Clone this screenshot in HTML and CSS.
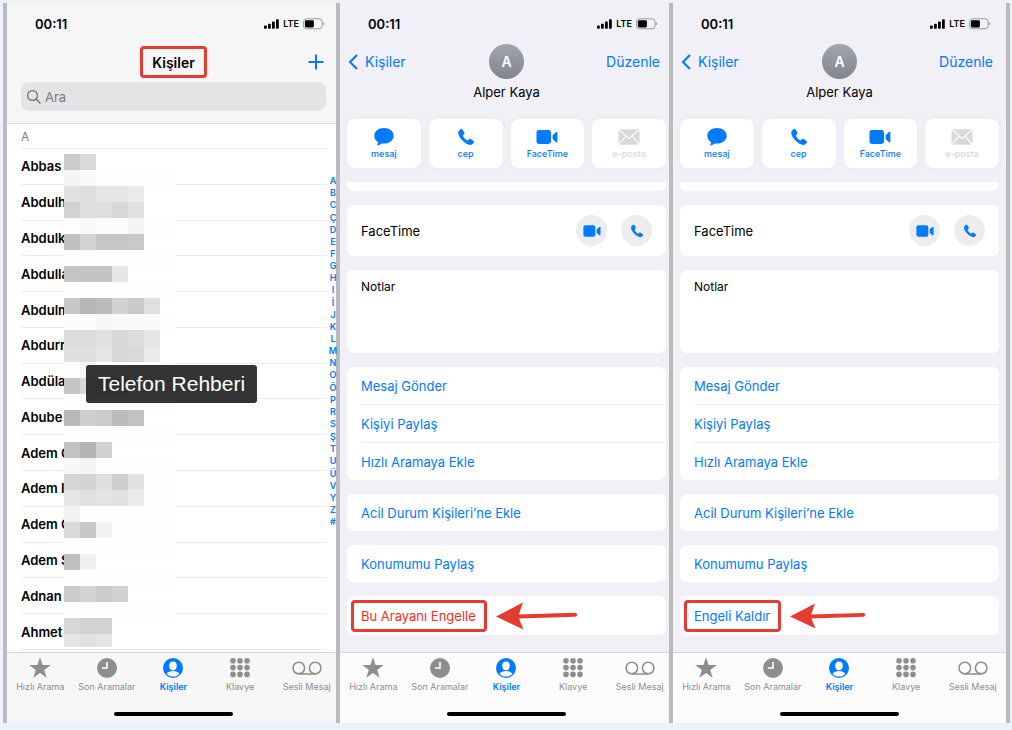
FILE: index.html
```html
<!DOCTYPE html>
<html lang="tr">
  <head>
    <meta charset="UTF-8" />
    <meta name="viewport" content="width=device-width, initial-scale=1.0" />
    <title>Telefon Rehberi</title>
    <link rel="stylesheet" href="styles.css">
  </head>

  <body>
    <!-- Shared icons -->
    <svg class="sprite" aria-hidden="true">
      <symbol id="signal" viewBox="0 0 15 10">
        <rect x="0" y="6.5" width="2.8" height="3.3" rx="0.8" />
        <rect x="4" y="4.8" width="2.8" height="5" rx="0.8" />
        <rect x="8" y="2.6" width="2.8" height="7.2" rx="0.8" />
        <rect x="12" y="0.2" width="2.8" height="9.6" rx="0.8" />
      </symbol>
      <symbol id="battery" viewBox="0 0 22 12">
        <rect x="0.5" y="0.8" width="18.6" height="10" rx="3" fill="none" stroke="#999" />
        <rect x="1.9" y="2.2" width="9" height="7.2" rx="1.4" />
        <path d="M20.2 4v3.6c1.4-.6 1.4-3 0-3.6z" fill="#999" />
      </symbol>
      <symbol id="star" viewBox="0 0 22 22">
        <path d="M11 .2l2.6 7.9h8.2l-6.6 4.8 2.5 7.9L11 15.9l-6.7 4.9 2.5-7.9L.2 8.1h8.2z" />
      </symbol>
      <symbol id="clock" viewBox="0 0 22 22">
        <circle cx="11" cy="11" r="10" />
        <path d="M11 5v6H6" fill="none" stroke="#fff" stroke-width="1.6" />
      </symbol>
      <symbol id="person" viewBox="0 0 22 22">
        <circle cx="11" cy="11" r="10" />
        <ellipse cx="11" cy="8.8" rx="3.8" ry="4.4" fill="#fff" />
        <path d="M4.6 17c1.2-2.2 3.6-3 6.4-3s5.2.8 6.4 3c-1.7 1.7-4 2.6-6.4 2.6S6.3 18.7 4.6 17z" fill="#fff" />
      </symbol>
      <symbol id="keypad" viewBox="0 0 22 22">
        <circle cx="4" cy="3.8" r="2.8" /><circle cx="11" cy="3.8" r="2.8" /><circle cx="18" cy="3.8" r="2.8" />
        <circle cx="4" cy="10.6" r="2.8" /><circle cx="11" cy="10.6" r="2.8" /><circle cx="18" cy="10.6" r="2.8" />
        <circle cx="4" cy="17.4" r="2.8" /><circle cx="11" cy="17.4" r="2.8" /><circle cx="18" cy="17.4" r="2.8" />
      </symbol>
      <symbol id="voicemail" viewBox="0 0 30 22">
        <path d="M6.5 17h17" />
        <circle cx="6.8" cy="11" r="5.8" />
        <circle cx="23.2" cy="11" r="5.8" />
      </symbol>
      <symbol id="bubble" viewBox="0 0 20 18">
        <path d="M10 0C4.5 0 .3 3.3.3 7.8c0 2.7 1.5 5 3.9 6.5-.1 1.1-.7 2.1-1.5 2.9 2.2 0 3.9-.7 5.1-1.8.7.1 1.4.2 2.2.2 5.5 0 9.7-3.3 9.7-7.8S15.500 0 10 0z" />
      </symbol>
      <symbol id="handset" viewBox="0 0 18 18">
        <path d="M3.600 1.200L1.900 2.700C.5 4.300 1.400 8 5 12c3.800 4.100 7.700 5.800 10 4.500l1.600-1.600c.6-.7.4-1.300-.2-1.800l-2.700-2c-.7-.5-1.300-.4-1.900.2l-.9.900c-.5.400-1 .2-1.600-.300C8.200 11 6.900 9.500 6.200 8.400c-.3-.5-.3-.9.100-1.300l.8-.9c.5-.5.6-1.200.2-1.900L5.500 1.400C5 .7 4.300.6 3.600 1.200z" />
      </symbol>
      <symbol id="camera" viewBox="0 0 22 14">
        <rect x="0.5" y="0" width="14.5" height="14" rx="2.4" />
        <path d="M16.600 5.200v3.900l3.500 3.100c.7.500 1.300.3 1.300-.5V2.500c0-.8-.6-1-1.300-.5z" />
      </symbol>
      <symbol id="envelope" viewBox="0 0 20 15">
        <rect x="0.5" y="0.5" width="19" height="14" rx="1" />
        <path d="M.8.8L10 8.800 19.200.8M.8 14.300l6.400-7.600M19.200 14.300l-6.400-7.600" fill="none" stroke="#fff" stroke-width="1.1" />
      </symbol>
      <symbol id="arrow" viewBox="0 0 82 28">
        <path d="M0 14.600L27 .5 22.800 12.500 79 10.800c2.800-.1 2.800 3.800 0 3.900L23 16.600 27.500 27.500z" />
      </symbol>
    </svg>

    <main class="screens">
      <!-- Contact list -->
      <section class="phone phone-list">
        <header class="list-header">
          <div class="status">
            <span class="time">00:11</span>
            <svg class="signal"><use href="#signal" /></svg>
            <span class="network">LTE</span>
            <svg class="battery"><use href="#battery" /></svg>
          </div>
          <div class="title-bar">
            <h1 class="marked">Kişiler</h1>
            <button class="add" aria-label="Ekle">
              <svg viewBox="0 0 16 16"><path d="M8 .5v15M.5 8h15" /></svg>
            </button>
          </div>
          <label class="search">
            <svg viewBox="0 0 14 14"><circle cx="5.5" cy="5.5" r="4.9" /><path d="M9 9l4.500 4.500" /></svg>
            <input type="search" placeholder="Ara" aria-label="Ara" />
          </label>
        </header>

        <div class="contacts">
          <h2>A</h2>
          <ul>
            <li>Abbas</li>
            <li>Abdulh</li>
            <li>Abdulk</li>
            <li>Abdulla</li>
            <li>Abdulm</li>
            <li>Abdurr</li>
            <li>Abdüla</li>
            <li>Abube</li>
            <li>Adem C</li>
            <li>Adem I</li>
            <li>Adem C</li>
            <li>Adem S</li>
            <li>Adnan</li>
            <li>Ahmet</li>
          </ul>
          <svg class="mosaic" id="mosaic" viewBox="0 0 111 493" aria-hidden="true"></svg>
          <nav class="letters">
            <a href="#">A</a><a href="#">B</a><a href="#">C</a><a href="#" class="accent">Ç</a>
            <a href="#">D</a><a href="#">E</a><a href="#">F</a><a href="#">G</a>
            <a href="#">H</a><a href="#">I</a><a href="#" class="accent">İ</a><a href="#">J</a>
            <a href="#">K</a><a href="#">L</a><a href="#">M</a><a href="#">N</a>
            <a href="#">O</a><a href="#" class="accent">Ö</a><a href="#">P</a><a href="#">R</a>
            <a href="#">S</a><a href="#" class="accent">Ş</a><a href="#">T</a><a href="#">U</a>
            <a href="#" class="accent">Ü</a><a href="#">V</a><a href="#">Y</a><a href="#">Z</a>
            <a href="#">#</a>
          </nav>
          <div class="tooltip">Telefon Rehberi</div>
        </div>

        <footer class="tab-bar">
          <nav>
            <a href="#"><svg><use href="#star" /></svg>Hızlı Arama</a>
            <a href="#"><svg><use href="#clock" /></svg>Son Aramalar</a>
            <a href="#" class="active"><svg><use href="#person" /></svg>Kişiler</a>
            <a href="#"><svg><use href="#keypad" /></svg>Klavye</a>
            <a href="#"><svg class="voicemail"><use href="#voicemail" /></svg>Sesli Mesaj</a>
          </nav>
          <div class="home-bar"></div>
        </footer>
      </section>

      <!-- Contact, before blocking -->
      <section class="phone">
        <header class="card-header">
          <div class="status">
            <span class="time">00:11</span>
            <svg class="signal"><use href="#signal" /></svg>
            <span class="network">LTE</span>
            <svg class="battery"><use href="#battery" /></svg>
          </div>
          <div class="card-nav">
            <a href="#" class="back"><svg viewBox="0 0 10 16"><path d="M9 1L2 8l7 7" /></svg>Kişiler</a>
            <span class="avatar">A</span>
            <a href="#" class="edit">Düzenle</a>
          </div>
          <p class="name">Alper Kaya</p>
          <div class="actions">
            <button><svg><use href="#bubble" /></svg>mesaj</button>
            <button><svg><use href="#handset" /></svg>cep</button>
            <button><svg><use href="#camera" /></svg>FaceTime</button>
            <button disabled><svg><use href="#envelope" /></svg>e-posta</button>
          </div>
        </header>

        <div class="cards">
          <div class="card card-cut"></div>
          <div class="card facetime">
            <span>FaceTime</span>
            <button aria-label="Görüntülü"><svg><use href="#camera" /></svg></button>
            <button aria-label="Sesli"><svg><use href="#handset" /></svg></button>
          </div>
          <div class="card notes">Notlar</div>
          <div class="card">
            <a href="#" class="row">Mesaj Gönder</a>
            <a href="#" class="row">Kişiyi Paylaş</a>
            <a href="#" class="row">Hızlı Aramaya Ekle</a>
          </div>
          <div class="card"><a href="#" class="row">Acil Durum Kişileri’ne Ekle</a></div>
          <div class="card"><a href="#" class="row">Konumumu Paylaş</a></div>
          <div class="card block-row">
            <a href="#" class="marked danger">Bu Arayanı Engelle</a>
            <svg class="arrow"><use href="#arrow" /></svg>
          </div>
        </div>

        <footer class="tab-bar">
          <nav>
            <a href="#"><svg><use href="#star" /></svg>Hızlı Arama</a>
            <a href="#"><svg><use href="#clock" /></svg>Son Aramalar</a>
            <a href="#" class="active"><svg><use href="#person" /></svg>Kişiler</a>
            <a href="#"><svg><use href="#keypad" /></svg>Klavye</a>
            <a href="#"><svg class="voicemail"><use href="#voicemail" /></svg>Sesli Mesaj</a>
          </nav>
          <div class="home-bar"></div>
        </footer>
      </section>

      <!-- Contact, after blocking -->
      <section class="phone">
        <header class="card-header">
          <div class="status">
            <span class="time">00:11</span>
            <svg class="signal"><use href="#signal" /></svg>
            <span class="network">LTE</span>
            <svg class="battery"><use href="#battery" /></svg>
          </div>
          <div class="card-nav">
            <a href="#" class="back"><svg viewBox="0 0 10 16"><path d="M9 1L2 8l7 7" /></svg>Kişiler</a>
            <span class="avatar">A</span>
            <a href="#" class="edit">Düzenle</a>
          </div>
          <p class="name">Alper Kaya</p>
          <div class="actions">
            <button><svg><use href="#bubble" /></svg>mesaj</button>
            <button><svg><use href="#handset" /></svg>cep</button>
            <button><svg><use href="#camera" /></svg>FaceTime</button>
            <button disabled><svg><use href="#envelope" /></svg>e-posta</button>
          </div>
        </header>

        <div class="cards">
          <div class="card card-cut"></div>
          <div class="card facetime">
            <span>FaceTime</span>
            <button aria-label="Görüntülü"><svg><use href="#camera" /></svg></button>
            <button aria-label="Sesli"><svg><use href="#handset" /></svg></button>
          </div>
          <div class="card notes">Notlar</div>
          <div class="card">
            <a href="#" class="row">Mesaj Gönder</a>
            <a href="#" class="row">Kişiyi Paylaş</a>
            <a href="#" class="row">Hızlı Aramaya Ekle</a>
          </div>
          <div class="card"><a href="#" class="row">Acil Durum Kişileri’ne Ekle</a></div>
          <div class="card"><a href="#" class="row">Konumumu Paylaş</a></div>
          <div class="card block-row">
            <a href="#" class="marked">Engeli Kaldır</a>
            <svg class="arrow arrow-short"><use href="#arrow" /></svg>
          </div>
        </div>

        <footer class="tab-bar">
          <nav>
            <a href="#"><svg><use href="#star" /></svg>Hızlı Arama</a>
            <a href="#"><svg><use href="#clock" /></svg>Son Aramalar</a>
            <a href="#" class="active"><svg><use href="#person" /></svg>Kişiler</a>
            <a href="#"><svg><use href="#keypad" /></svg>Klavye</a>
            <a href="#"><svg class="voicemail"><use href="#voicemail" /></svg>Sesli Mesaj</a>
          </nav>
          <div class="home-bar"></div>
        </footer>
      </section>
    </main>

    <script src="mosaic.js"></script>
  </body>
</html>
```
FILE: styles.css
```css
* {
  box-sizing: border-box;
}

body {
  margin: 0;
  min-height: 100vh;
  display: flex;
  background-color: #ecf2f9;
  font-family: Inter, "Liberation Sans", sans-serif;
  font-size: 13px;
  color: #000;
}

a {
  color: #007aff;
  text-decoration: none;
}

button {
  padding: 0;
  border: none;
  background: none;
  font-family: inherit;
  color: #007aff;
  cursor: pointer;
}

h1,
h2,
p,
ul {
  margin: 0;
  padding: 0;
}

.sprite {
  position: absolute;
  width: 0;
  height: 0;
}

.screens {
  flex: 1;
  display: grid;
  grid-template-columns: repeat(3, 1fr);
  padding: 3px 6px 7px 7px;
}

.phone {
  position: relative;
  display: flex;
  flex-direction: column;
  background-color: #f1f0f6;
}

.phone-list {
  background-color: #fff;
}

/* grey line between the screens */
.phone::before,
.phone:last-child::after {
  content: "";
  position: absolute;
  top: 0;
  bottom: 0;
  left: -4px;
  width: 4px;
  background-color: #bbbbbd;
}

.phone:last-child::after {
  left: auto;
  right: -4px;
}

/* Status bar */
.status {
  display: flex;
  align-items: center;
  height: 41px;
  padding: 0 15px 0 28px;
}

.time {
  flex: 1;
  font-size: 13px;
  font-weight: 600;
}

.signal {
  width: 15px;
  height: 10px;
}

.network {
  margin: 0 4px;
  font-size: 9px;
  font-weight: 600;
  line-height: 12px;
}

.battery {
  width: 22px;
  height: 12px;
}

/* Contact list */
.list-header {
  height: 121px;
  background-color: #f6f6f7;
  border-bottom: 1px solid #dcdcde;
}

.title-bar {
  display: grid;
  grid-template-columns: 1fr auto 1fr;
  align-items: center;
  height: 36px;
  padding: 0 16px;
}

.marked {
  display: flex;
  align-items: center;
  height: 32px;
  border: 3px solid #e53c32;
  border-radius: 4px;
}

.title-bar h1 {
  grid-column: 2;
  padding: 0 9px;
  font-size: 14px;
  font-weight: 600;
}

.add {
  justify-self: end;
  display: flex;
}

.add svg {
  width: 16px;
  height: 16px;
  stroke: #007aff;
  stroke-width: 2;
}

.search {
  display: flex;
  align-items: center;
  gap: 4px;
  height: 29px;
  margin: 2px 14px 0;
  padding: 0 6px;
  border-radius: 8px;
  background-color: #e4e4e6;
}

.search svg {
  width: 14px;
  height: 14px;
  fill: none;
  stroke: #707074;
  stroke-width: 1.2;
}

.search input {
  flex: 1;
  min-width: 0;
  padding: 0;
  border: none;
  outline: none;
  background: none;
  font-family: inherit;
  font-size: 13px;
}

.search input::placeholder {
  color: #7b7b80;
}

.contacts {
  position: relative;
  flex: 1;
  display: flex;
  flex-direction: column;
  padding: 0 13px 2px 14px;
}

.contacts h2 {
  height: 25px;
  border-bottom: 1px solid #ececee;
  font-size: 12px;
  font-weight: 400;
  line-height: 25px;
  color: #7b7b80;
}

.contacts ul {
  flex: 1;
  display: flex;
  flex-direction: column;
  list-style: none;
}

.contacts li {
  flex: 1;
  display: flex;
  align-items: center;
  border-bottom: 1px solid #ececee;
  font-weight: 600;
}

.mosaic {
  position: absolute;
  top: 30px;
  left: 57px;
  width: 111px;
  height: 493px;
  shape-rendering: crispEdges;
}

.letters {
  position: absolute;
  top: 51px;
  right: 1px;
  z-index: 1;
  width: 12px;
  display: flex;
  flex-direction: column;
  font-size: 9px;
  font-weight: 600;
  line-height: 12px;
  text-align: center;
}

.letters .accent {
  line-height: 13px;
}

.tooltip {
  position: absolute;
  top: 241px;
  left: 79px;
  padding: 0 12px;
  border-radius: 3px;
  background-color: rgba(38, 38, 38, 0.94);
  color: #fff;
  font-family: "Liberation Sans", sans-serif;
  font-size: 21px;
  line-height: 38px;
}

/* Contact card */
.card-header {
  height: 179px;
}

.card-nav {
  display: grid;
  grid-template-columns: 1fr auto 1fr;
  align-items: center;
  padding: 0 8px;
  font-size: 14px;
}

.back {
  display: flex;
  align-items: center;
  gap: 7px;
}

.back svg {
  width: 10px;
  height: 16px;
  fill: none;
  stroke: #007aff;
  stroke-width: 2;
}

.avatar {
  width: 35px;
  height: 35px;
  border-radius: 50%;
  background: linear-gradient(#a1a5b1, #82858f);
  color: #fff;
  font-weight: 600;
  line-height: 35px;
  text-align: center;
}

.edit {
  justify-self: end;
  padding-right: 5px;
}

.name {
  margin: 4px 0 18px;
  line-height: 18px;
  text-align: center;
}

.actions {
  display: grid;
  grid-template-columns: repeat(4, 1fr);
  gap: 8px;
  padding: 0 7px;
}

.actions button {
  display: flex;
  flex-direction: column;
  align-items: center;
  height: 49px;
  padding-top: 9px;
  border-radius: 8px;
  background-color: #fff;
  box-shadow: 0 0 8px rgba(0, 0, 0, 0.03);
  font-size: 9px;
  font-weight: 500;
  line-height: 16px;
}

.actions svg {
  width: 22px;
  height: 18px;
  fill: currentColor;
}

.actions button:disabled {
  color: #d9d9db;
}

.cards {
  flex: 1;
  display: flex;
  flex-direction: column;
  gap: 14px;
  padding: 0 7px;
}

.card {
  padding-left: 14px;
  border-radius: 7px;
  background-color: #fff;
}

.card-cut {
  height: 9px;
  border-radius: 0 0 7px 7px;
}

.facetime {
  display: flex;
  align-items: center;
  gap: 14px;
  height: 51px;
  padding-right: 14px;
}

.facetime span {
  flex: 1;
}

.facetime button {
  display: flex;
  align-items: center;
  justify-content: center;
  width: 31px;
  height: 31px;
  border-radius: 50%;
  background-color: #ededef;
}

.facetime svg {
  width: 18px;
  height: 14px;
  fill: #007aff;
}

.notes {
  height: 83px;
  font-size: 12px;
  line-height: 34px;
}

.row {
  display: block;
  padding-top: 2px;
  line-height: 35px;
}

.row + .row {
  border-top: 1px solid #ececee;
}

.block-row {
  display: flex;
  align-items: center;
  gap: 9px;
  height: 39px;
  padding-left: 4px;
}

.block-row .marked {
  padding: 0 8px 0 7px;
}

.danger {
  color: #ff2d20;
}

.arrow {
  width: 82px;
  height: 28px;
  fill: #e53c32;
}

.arrow-short {
  width: 76px;
}

/* Tab bar */
.tab-bar {
  height: 71px;
  border-top: 1px solid #d8d8dc;
  background-color: #fcfcfd;
}

.phone-list .tab-bar {
  background-color: #f7f7f7;
}

.tab-bar nav {
  display: grid;
  grid-template-columns: repeat(5, 1fr);
  padding-top: 4px;
}

.tab-bar a {
  display: flex;
  flex-direction: column;
  align-items: center;
  color: #8e8e90;
  font-size: 9px;
  font-weight: 400;
  line-height: 16px;
  white-space: nowrap;
}

.tab-bar svg {
  width: 22px;
  height: 22px;
  fill: currentColor;
}

.tab-bar .voicemail {
  width: 30px;
  fill: none;
  stroke: currentColor;
  stroke-width: 1.5;
}

.tab-bar .active {
  color: #007aff;
  font-weight: 600;
}

.home-bar {
  width: 119px;
  height: 4px;
  margin: 17px auto 0;
  border-radius: 2px;
  background-color: #000;
}
```
FILE: mosaic.js
```js
// grey levels of the blocks that hide the surnames, one line per 16px row
const rows = [
  "cb d9",
  "f5 f9 fd fd fd fd fd",
  "e1 de e5 e6 ea",
  "d3 de df d8 e1",
  "fd f8 fc fc f5 fd fd",
  "c1 d3 c6 c6 c9",
  "fd fd fd fd fd fd fd",
  "c4 c3 c3 e7",
  "fd fd fd fd fd fd fd",
  "c7 b6 bc d1 ca e0",
  "fc fc f7 fa fa fa fd",
  "dc dc e1 d8 dc e7",
  "df df e6 d8 d9 ea",
  "fd f4 fd fd fd fd fd",
  "c5 d7 bb bb",
  "fd fd fd fd fd fd fd",
  "b9 cf cb bc c2",
  "fd fd fd fd fd fd fd",
  "c2 b4 d1",
  "f7 f3 fd fd fd fd fd",
  "d5 d3 df cf e2 fd fd",
  "e6 e0 e4 e2 ea fd fd",
  "f1 fd fd fd fd fd fd",
  "d9 c7 f2 fd fd fd fd",
  "fd fd fd fd fd fd fd",
  "c0 f0",
  "fd fd fd fd fd fd fd",
  "cc d3 cb d1",
  "fd fd fd fd fd fd fd",
  "d7 d2 d2",
  "e6 e1 e6",
];

let rects = "";
rows.forEach((row, y) => {
  row.split(" ").forEach((level, x) => {
    rects += `<rect x="${x * 16}" y="${y * 16}" width="16" height="16" fill="#${level.repeat(3)}" />`;
  });
});
document.getElementById("mosaic").innerHTML = rects;
```
